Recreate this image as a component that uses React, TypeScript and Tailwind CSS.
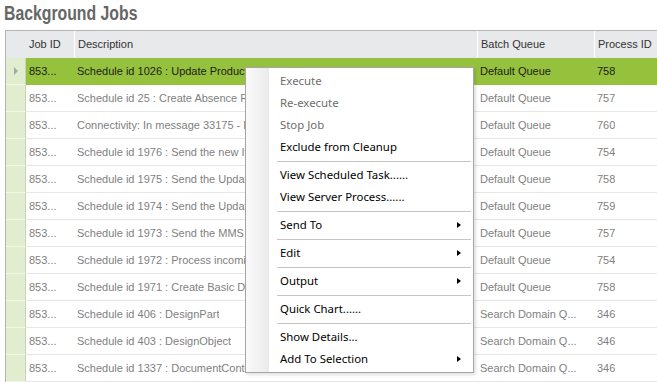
import React from "react";

const rows = [
  ["853...", "Schedule id 1026 : Update Product Structure for Changed Items", "Default Queue", "758"],
  ["853...", "Schedule id 25 : Create Absence Records for the Current Period", "Default Queue", "757"],
  ["853...", "Connectivity: In message 33175 - Processing inbound document", "Default Queue", "760"],
  ["853...", "Schedule id 1976 : Send the new Items to the external system", "Default Queue", "754"],
  ["853...", "Schedule id 1975 : Send the Updated Items to the external system", "Default Queue", "758"],
  ["853...", "Schedule id 1974 : Send the Updated Parts to the external system", "Default Queue", "759"],
  ["853...", "Schedule id 1973 : Send the MMS Messages to the external system", "Default Queue", "757"],
  ["853...", "Schedule id 1972 : Process incoming messages from the queue", "Default Queue", "754"],
  ["853...", "Schedule id 1971 : Create Basic Data for the new Sites", "Default Queue", "758"],
  ["853...", "Schedule id 406 : DesignPart", "Search Domain Q...", "346"],
  ["853...", "Schedule id 403 : DesignObject", "Search Domain Q...", "346"],
  ["853...", "Schedule id 1337 : DocumentContent", "Search Domain Q...", "346"],
];

type Item =
  | { sep: true }
  | { label: string; disabled?: boolean; sub?: boolean };

const menu: Item[] = [
  { label: "Execute", disabled: true },
  { label: "Re-execute", disabled: true },
  { label: "Stop Job", disabled: true },
  { label: "Exclude from Cleanup" },
  { sep: true },
  { label: "View Scheduled Task......" },
  { label: "View Server Process......" },
  { sep: true },
  { label: "Send To", sub: true },
  { sep: true },
  { label: "Edit", sub: true },
  { sep: true },
  { label: "Output", sub: true },
  { sep: true },
  { label: "Quick Chart......" },
  { sep: true },
  { label: "Show Details..." },
  { label: "Add To Selection", sub: true },
];

const grid = "grid grid-cols-[20px_48px_403px_117px_1fr]";

export default function App() {
  return (
    <div className="relative w-[657px] h-[382px] overflow-hidden bg-white">
      <div className="h-[30px] pl-[4px] pt-[1px]">
        <div
          className="inline-block origin-left scale-x-[0.79] text-[20px] font-bold leading-[24px] text-[#666666] whitespace-nowrap"
          style={{ fontFamily: '"Liberation Sans", Arial, sans-serif' }}
        >
          Background Jobs
        </div>
      </div>
      <div
        className="ml-[5px] border-l border-t border-[#b4b4b4] text-[11px]"
        style={{ fontFamily: '"Liberation Sans", Arial, sans-serif' }}
      >
        <div className={`${grid} h-[27px] bg-[#e8e9eb] border-b border-[#e8e9eb] text-[#333333]`}>
          <div />
          <div className="flex items-center pl-[3px]">Job ID</div>
          <div className="flex items-center pl-[3px] border-l border-white">Description</div>
          <div className="flex items-center pl-[3px] border-l border-white">Batch Queue</div>
          <div className="flex items-center pl-[3px] border-l border-white">Process ID</div>
        </div>
        {rows.map((r, i) => {
          const sel = i === 0;
          return (
            <div key={i} className={`${grid} h-[27px]`}>
              <div className="flex items-center justify-center bg-[#e2ecce] border-b border-[#f3f7ea] border-r border-r-[#c9d3b8]">
                {sel && (
                  <div className="w-0 h-0 border-y-[4px] border-y-transparent border-l-[4px] border-l-[#a6a9a0]" />
                )}
              </div>
              {r.map((c, j) => (
                <div
                  key={j}
                  className={`flex items-center pl-[3px] pr-[2px] overflow-hidden whitespace-nowrap ${
                    sel ? "bg-[#95c13d] text-[#1c1c1c]" : "text-[#7f7f7f] border-b border-[#e6e6e6]"
                  }`}
                >
                  <span className="truncate">{c}</span>
                </div>
              ))}
            </div>
          );
        })}
      </div>

      <div
        className="absolute left-[245px] top-[67px] w-[229px] border border-[#a5a5a5] bg-white py-[2px] shadow-[2px_2px_3px_rgba(0,0,0,0.12)] text-[11.4px]"
        style={{ fontFamily: '"Noto Sans", "Open Sans", sans-serif' }}
      >
        <div className="absolute left-0 top-0 bottom-0 w-[23px] bg-gradient-to-r from-[#f9f9f9] to-[#ebebeb]" />
        {menu.map((m, i) =>
          "sep" in m ? (
            <div key={i} className="relative h-[6px] flex items-center pl-[31px] pr-[2px]">
              <div className="h-px w-full bg-[#c5c5c5]" />
            </div>
          ) : (
            <div
              key={i}
              className={`relative h-[22px] flex items-center pl-[34px] pr-[12px] leading-none ${
                m.disabled ? "text-[#6d6d6d]" : "text-black"
              }`}
            >
              <span className="flex-1">{m.label}</span>
              {m.sub && (
                <div className="w-0 h-0 border-y-[3.5px] border-y-transparent border-l-[4px] border-l-black" />
              )}
            </div>
          )
        )}
      </div>
    </div>
  );
}
